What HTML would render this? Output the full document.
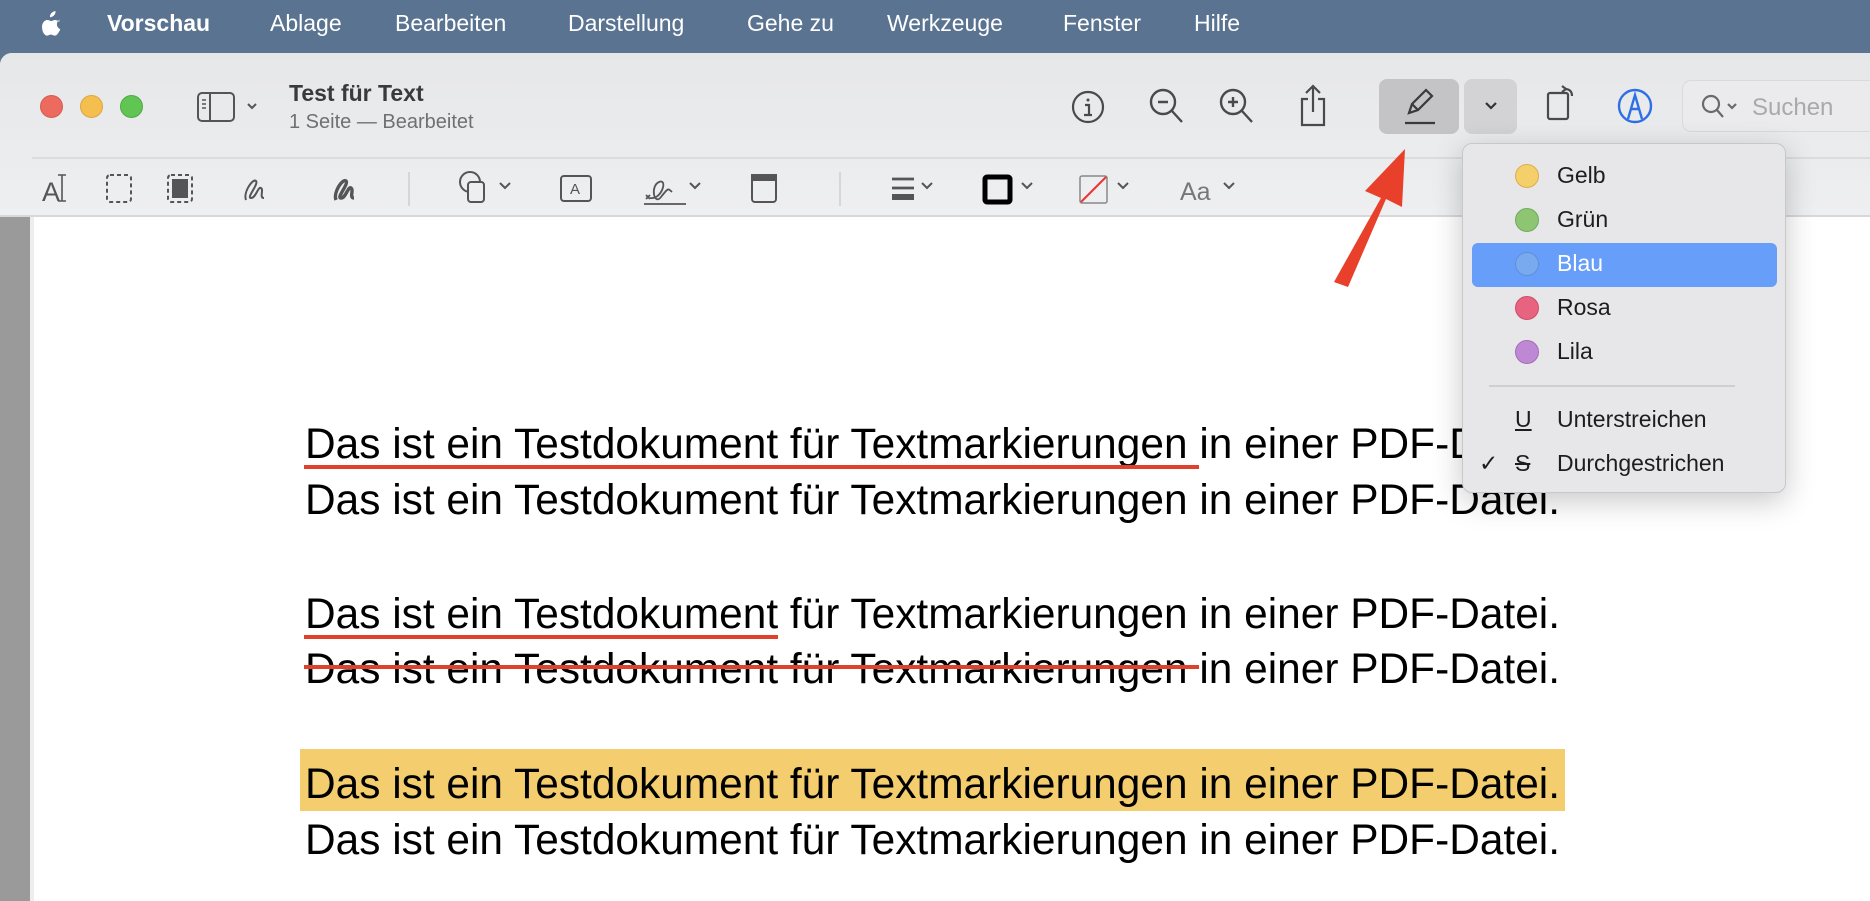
<!DOCTYPE html>
<html><head><meta charset="utf-8"><style>
*{margin:0;padding:0;box-sizing:border-box}
body{width:1870px;height:901px;overflow:hidden;background:#5d7591;font-family:"Liberation Sans",sans-serif;position:relative}
.mb{position:absolute;top:0;left:0;width:1870px;height:50px;background:#5a7391;color:#fff;font-size:23px}
.mb span{position:absolute;top:10px}
.win{position:absolute;top:53px;left:0;width:1870px;height:848px;background:#fff;border-top-left-radius:12px;overflow:hidden}
.tb{position:absolute;top:0;left:0;width:1870px;height:162px;background:linear-gradient(#e6e7e9,#eeeff1)}
.abs{position:absolute}
.doc{position:absolute;top:162px;left:0;width:1870px;height:686px;background:#fff}
.menu{position:absolute;left:1462px;top:143px;width:324px;height:350px;background:#e7e7e9;border:1px solid #c8c8ca;border-radius:10px;box-shadow:0 8px 30px rgba(0,0,0,.22);font-size:23px;color:#1d1d1d}
.menu .it{position:absolute;left:94px}
.dot{position:absolute;left:52px;width:24px;height:24px;border-radius:50%}
</style></head><body>
<div class="mb">
<svg class="abs" style="left:42px;top:11px" width="20" height="25" viewBox="0 0 20 25"><path d="M13.5 0c.2 1.7-.5 3.3-1.5 4.4-1 1.1-2.5 1.9-4 1.8-.2-1.6.6-3.2 1.5-4.2 1-1.1 2.7-1.9 4-2zM17.6 8.6c-.2.1-2.7 1.6-2.7 4.7 0 3.6 3.2 4.8 3.3 4.9 0 .1-.5 1.7-1.7 3.4-1 1.5-2.1 3-3.7 3-1.6 0-2.1-1-3.900-1-1.900 0-2.400 1-3.900 1-1.600 0-2.800-1.600-3.800-3.100C-.2 18.4-.5 13.9 1.2 11.5c.9-1.5 2.5-2.5 4.2-2.5 1.6 0 2.6 1 3.9 1 1.3 0 2.1-1 3.9-1 1.4 0 2.9.7 3.9 2z" fill="#fff"/></svg>
<span style="left:107px;font-weight:bold">Vorschau</span>
<span style="left:270px">Ablage</span>
<span style="left:395px">Bearbeiten</span>
<span style="left:568px">Darstellung</span>
<span style="left:747px">Gehe zu</span>
<span style="left:887px">Werkzeuge</span>
<span style="left:1063px">Fenster</span>
<span style="left:1194px">Hilfe</span>
</div>
<div class="win">
<div class="tb">
<div class="abs" style="left:40px;top:42px;width:23px;height:23px;border-radius:50%;background:#ed6a5e;border:1px solid #d55b50"></div>
<div class="abs" style="left:80px;top:42px;width:23px;height:23px;border-radius:50%;background:#f5bf4f;border:1px solid #d9a63f"></div>
<div class="abs" style="left:120px;top:42px;width:23px;height:23px;border-radius:50%;background:#61c554;border:1px solid #51a846"></div>
<svg class="abs" style="left:196px;top:36px" width="64" height="36" viewBox="0 0 64 36" fill="none" stroke="#555" stroke-width="2"><rect x="2" y="4" width="36" height="28" rx="4"/><line x1="14" y1="4" x2="14" y2="32"/><path d="M6 11h4M6 15h4M6 19h4" stroke-width="1.5"/><path d="M52 15l4 4 4-4"/></svg>
<div class="abs" style="left:289px;top:27px;font-size:23px;font-weight:bold;color:#3a3a3a">Test für Text</div>
<div class="abs" style="left:289px;top:58px;font-size:20px;color:#707070">1 Seite — Bearbeitet</div>
<svg class="abs" style="left:1070px;top:36px" width="36" height="36" viewBox="0 0 36 36" fill="none" stroke="#4a4a4a" stroke-width="2.2"><circle cx="18" cy="18" r="15"/><circle cx="18" cy="11" r="1.5" fill="#4a4a4a" stroke="none"/><path d="M15 16h4v10M14 26h8"/></svg>
<svg class="abs" style="left:1148px;top:34px" width="38" height="40" viewBox="0 0 38 40" fill="none" stroke="#4a4a4a" stroke-width="2.4"><circle cx="15" cy="15" r="12"/><path d="M24 24l10 11M10 15h10"/></svg>
<svg class="abs" style="left:1218px;top:34px" width="38" height="40" viewBox="0 0 38 40" fill="none" stroke="#4a4a4a" stroke-width="2.4"><circle cx="15" cy="15" r="12"/><path d="M24 24l10 11M10 15h10M15 10v10"/></svg>
<svg class="abs" style="left:1298px;top:30px" width="30" height="44" viewBox="0 0 30 44" fill="none" stroke="#4a4a4a" stroke-width="2.2"><path d="M10 16H4v26h22V16h-6M15 3v26M8 10l7-7 7 7"/></svg>
<div class="abs" style="left:1379px;top:26px;width:80px;height:55px;border-radius:8px;background:#c4c4c6"></div>
<svg class="abs" style="left:1400px;top:32px" width="40" height="42" viewBox="0 0 40 42" fill="none" stroke="#3a3a3a" stroke-width="2.2"><path d="M9 28l3-9L26 5l6 6-14 14z M12 19l6 6"/><line x1="5" y1="38" x2="35" y2="38"/></svg>
<div class="abs" style="left:1464px;top:26px;width:53px;height:55px;border-radius:8px;background:#d3d3d5"></div>
<svg class="abs" style="left:1484px;top:48px" width="14" height="10" viewBox="0 0 14 10" fill="none" stroke="#333" stroke-width="2.2"><path d="M2 2l5 5 5-5"/></svg>
<svg class="abs" style="left:1545px;top:26px" width="34" height="44" viewBox="0 0 34 44" fill="none" stroke="#4a4a4a" stroke-width="2.2"><rect x="3" y="14" width="20" height="26" rx="2"/><path d="M20 10c4 0 7 2 7 7M17 7l4 3-4 3"/></svg>
<svg class="abs" style="left:1616px;top:34px" width="38" height="38" viewBox="0 0 38 38" fill="none" stroke="#2f6fe6" stroke-width="2.4"><circle cx="19" cy="19" r="16"/><path d="M12 32L19 8l7 24M15 22h8"/></svg>
<div class="abs" style="left:1682px;top:27px;width:200px;height:52px;border-radius:9px;background:#ebebed;border:1px solid #dadadc"></div>
<svg class="abs" style="left:1700px;top:40px" width="40" height="28" viewBox="0 0 40 28" fill="none" stroke="#6a6a6a" stroke-width="2.2"><circle cx="11" cy="11" r="8"/><path d="M17 17l6 7M28 11l4 4 4-4"/></svg>
<div class="abs" style="left:1752px;top:41px;font-size:24px;color:#a9a9a9">Suchen</div>
<div class="abs" style="left:32px;top:104px;width:1840px;height:2px;background:#dcdcde"></div>
<svg class="abs" style="left:0;top:105px" width="1300" height="57" viewBox="0 0 1300 57" fill="none" stroke="#555" stroke-width="2">
<text x="42" y="43" font-size="27" fill="#555" stroke="none" font-family="Liberation Sans">A</text><path d="M62 17v26M58 17h8M58 43h8" stroke-width="1.6"/>
<rect x="107" y="17" width="24" height="27" rx="3" stroke-dasharray="4 3"/>
<rect x="168" y="17" width="24" height="27" rx="3" stroke-dasharray="4 3"/><rect x="172" y="21" width="16" height="19" fill="#555" stroke="none"/>
<path d="M246 42c-3-8 7-22 10-19s-10 17-5 17 7-12 10-10-2 10 3 10" stroke-width="2"/>
<path d="M336 42c-3-8 7-22 10-19s-10 17-5 17 7-12 10-10-2 10 3 10" stroke-width="3.4"/>
<line x1="409" y1="14" x2="409" y2="48" stroke="#d6d6d8"/>
<circle cx="470" cy="24" r="10"/><rect x="468" y="24" width="16" height="20" rx="3" fill="#eceef0"/><path d="M500 25l5 5 5-5"/>
<rect x="561" y="18" width="30" height="25" rx="3"/><text x="570" y="36" font-size="15" fill="#555" stroke="none" font-family="Liberation Sans">A</text>
<path d="M650 40c12 2 18-20 9-16s-5 24 2 15 7-9 11-5M644 46h42M646 37l4 4M650 37l-4 4" stroke-width="1.8"/><path d="M690 25l5 5 5-5"/>
<rect x="752" y="17" width="24" height="27" rx="3"/><rect x="752" y="17" width="24" height="5" fill="#555"/>
<line x1="840" y1="14" x2="840" y2="48" stroke="#d6d6d8"/>
<path d="M892 21h22M892 30h22" stroke-width="2.8"/><rect x="892" y="36" width="22" height="6" fill="#555" stroke="none"/><path d="M922 25l5 5 5-5"/>
<rect x="985" y="19" width="25" height="25" rx="2" stroke="#000" stroke-width="5"/><path d="M1022 25l5 5 5-5"/>
<rect x="1080" y="18" width="27" height="27" rx="2" stroke="#888" stroke-width="1.5"/><line x1="1081" y1="44" x2="1106" y2="19" stroke="#e33" stroke-width="2"/><path d="M1118 25l5 5 5-5"/>
<text x="1180" y="42" font-size="25" fill="#777" stroke="none" font-family="Liberation Sans">Aa</text><path d="M1224 25l5 5 5-5"/>
</svg>
</div>
<div class="doc">
<div class="abs" style="left:0;top:0;width:30px;height:686px;background:#9a9a9a"></div>
<div class="abs" style="left:30px;top:0;width:4px;height:686px;background:#eeeeee"></div>
<div class="abs" style="left:0;top:0;width:1870px;height:2px;background:#d8d8da"></div>
</div>
</div>
<svg class="abs" style="left:0;top:0" width="1870" height="901" viewBox="0 0 1870 901">
<rect x="300" y="749" width="1265" height="62" fill="#f4ce6e"/>
<g font-family="Liberation Sans, sans-serif" font-size="43" fill="#000">
<text x="305" y="458" textLength="1255" lengthAdjust="spacingAndGlyphs">Das ist ein Testdokument für Textmarkierungen in einer PDF-Datei.</text>
<text x="305" y="514" textLength="1255" lengthAdjust="spacingAndGlyphs">Das ist ein Testdokument für Textmarkierungen in einer PDF-Datei.</text>
<text x="305" y="628" textLength="1255" lengthAdjust="spacingAndGlyphs">Das ist ein Testdokument für Textmarkierungen in einer PDF-Datei.</text>
<text x="305" y="683" textLength="1255" lengthAdjust="spacingAndGlyphs">Das ist ein Testdokument für Textmarkierungen in einer PDF-Datei.</text>
<text x="305" y="798" textLength="1255" lengthAdjust="spacingAndGlyphs">Das ist ein Testdokument für Textmarkierungen in einer PDF-Datei.</text>
<text x="305" y="854" textLength="1255" lengthAdjust="spacingAndGlyphs">Das ist ein Testdokument für Textmarkierungen in einer PDF-Datei.</text>
</g>
<rect x="304" y="465" width="895" height="4" fill="#e0412c"/>
<rect x="304" y="635" width="474" height="4" fill="#e0412c"/>
<rect x="304" y="665" width="895" height="4" fill="#e0412c"/>
<path d="M1334 282l14 5 38-88 16 8 3-58-40 42 16 7z" fill="#e8402a"/>
</svg>
<div class="menu">
<div class="dot" style="top:20px;background:#f4cf6a;border:1px solid #dcae4c"></div><div class="it" style="top:18px">Gelb</div>
<div class="dot" style="top:64px;background:#8dc573;border:1px solid #71ab59"></div><div class="it" style="top:62px">Grün</div>
<div class="abs" style="left:9px;top:99px;width:305px;height:44px;border-radius:6px;background:#669ef9"></div>
<div class="dot" style="top:108px;background:#79aaf0;border:1px solid #5d90d8"></div><div class="it" style="top:106px;color:#fff">Blau</div>
<div class="dot" style="top:152px;background:#e8637f;border:1px solid #cc4e6a"></div><div class="it" style="top:150px">Rosa</div>
<div class="dot" style="top:196px;background:#bf88d4;border:1px solid #a16fb7"></div><div class="it" style="top:194px">Lila</div>
<div class="abs" style="left:26px;top:241px;width:246px;height:2px;background:#cfcfd1"></div>
<div class="abs" style="left:52px;top:262px;text-decoration:underline">U</div><div class="it" style="top:262px">Unterstreichen</div>
<div class="abs" style="left:16px;top:306px">✓</div><div class="abs" style="left:52px;top:306px;text-decoration:line-through">S</div><div class="it" style="top:306px">Durchgestrichen</div>
</div>
</body></html>
